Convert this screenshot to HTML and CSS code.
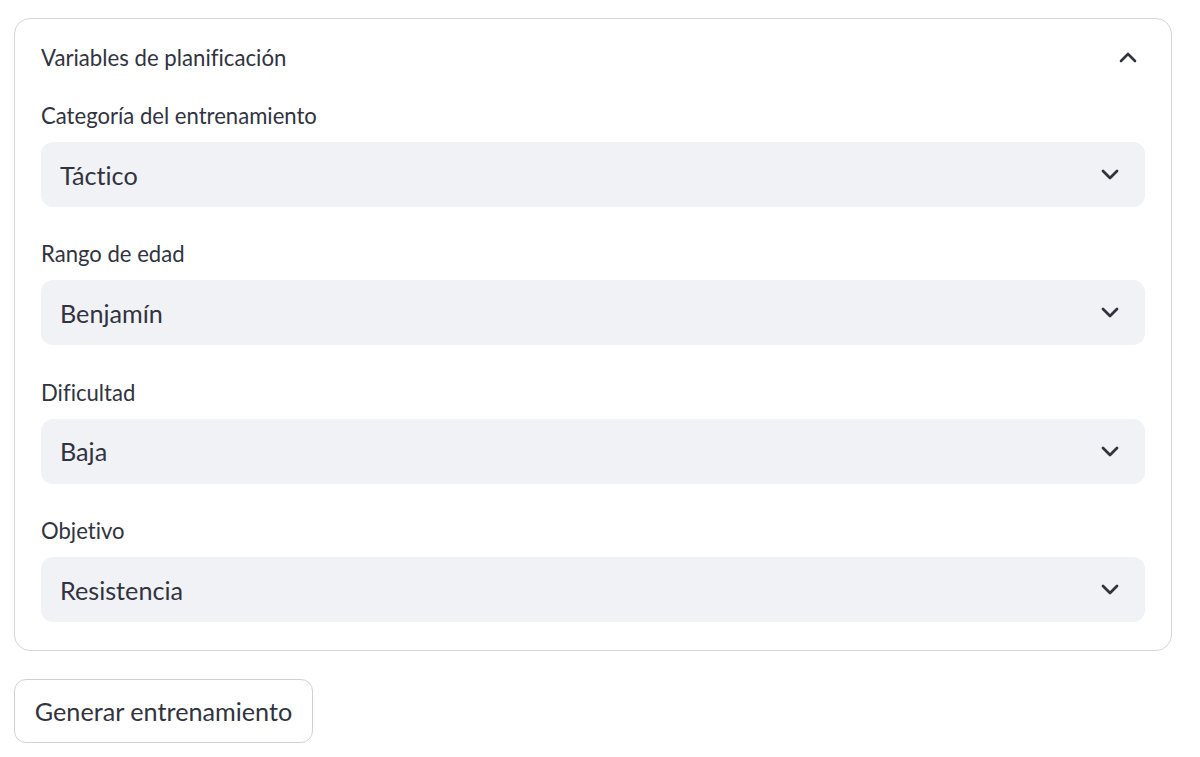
FILE: index.html
```html
<!DOCTYPE html>
<html lang="es">
<head>
<meta charset="utf-8">
<title>Variables de planificación</title>
<link rel="stylesheet" href="styles.css">
</head>
<body>
<div class="page">
  <div class="expander">
    <div class="exp-header">
      <span class="exp-title">Variables de planificación</span>
      <svg class="chev-up" width="18" height="11" viewBox="0 0 18 11"><path d="M2 9 L9 2 L16 9" fill="none" stroke="#31333f" stroke-width="2.6" stroke-linecap="round" stroke-linejoin="round"/></svg>
    </div>
    <div class="exp-body">
      <div class="field">
        <div class="label">Categoría del entrenamiento</div>
        <div class="select"><span class="value">Táctico</span><svg class="chev" width="18" height="11" viewBox="0 0 18 11"><path d="M2 2 L9 9 L16 2" fill="none" stroke="#31333f" stroke-width="2.8" stroke-linecap="round" stroke-linejoin="round"/></svg></div>
      </div>
      <div class="field">
        <div class="label">Rango de edad</div>
        <div class="select"><span class="value">Benjamín</span><svg class="chev" width="18" height="11" viewBox="0 0 18 11"><path d="M2 2 L9 9 L16 2" fill="none" stroke="#31333f" stroke-width="2.8" stroke-linecap="round" stroke-linejoin="round"/></svg></div>
      </div>
      <div class="field">
        <div class="label">Dificultad</div>
        <div class="select"><span class="value">Baja</span><svg class="chev" width="18" height="11" viewBox="0 0 18 11"><path d="M2 2 L9 9 L16 2" fill="none" stroke="#31333f" stroke-width="2.8" stroke-linecap="round" stroke-linejoin="round"/></svg></div>
      </div>
      <div class="field">
        <div class="label">Objetivo</div>
        <div class="select"><span class="value">Resistencia</span><svg class="chev" width="18" height="11" viewBox="0 0 18 11"><path d="M2 2 L9 9 L16 2" fill="none" stroke="#31333f" stroke-width="2.8" stroke-linecap="round" stroke-linejoin="round"/></svg></div>
      </div>
    </div>
  </div>
  <button class="btn">Generar entrenamiento</button>
</div>
</body>
</html>
```

FILE: styles.css
```css
html, body {
  margin: 0;
  padding: 0;
  background: #ffffff;
}
body {
  font-family: "Lato", "Noto Sans", sans-serif;
  font-variant-ligatures: none;
  color: #31333f;
}
.page {
  padding: 18px 28px 0 14px;
}
.expander {
  border: 1px solid #d6d6da;
  border-radius: 16px;
  box-sizing: border-box;
}
.exp-header {
  height: 76px;
  display: flex;
  align-items: center;
  justify-content: space-between;
  padding: 0 34px 0 26px;
}
.exp-title {
  font-size: 22.2px;
}
.chev-up {
  display: block;
}
.exp-body {
  padding: 6px 26px 28px 26px;
  display: flex;
  flex-direction: column;
  gap: 32.4px;
}
.label {
  font-size: 22.1px;
  height: 30px;
  line-height: 30px;
  margin-bottom: 11px;
}
.select {
  height: 65px;
  background: #f0f2f6;
  border-radius: 12px;
  display: flex;
  align-items: center;
  justify-content: space-between;
  padding: 0 26px 0 19px;
}
.value {
  font-size: 25.2px;
}
.chev {
  display: block;
}
.btn {
  display: block;
  margin-top: 28px;
  height: 64px;
  padding: 0;
  width: 299px;
  box-sizing: border-box;
  white-space: nowrap;
  text-align: center;
  background: #ffffff;
  border: 1px solid #d0d1d6;
  border-radius: 12px;
  font-family: "Lato", "Noto Sans", sans-serif;
  font-variant-ligatures: none;
  font-size: 25.2px;
  color: #31333f;
}
```
